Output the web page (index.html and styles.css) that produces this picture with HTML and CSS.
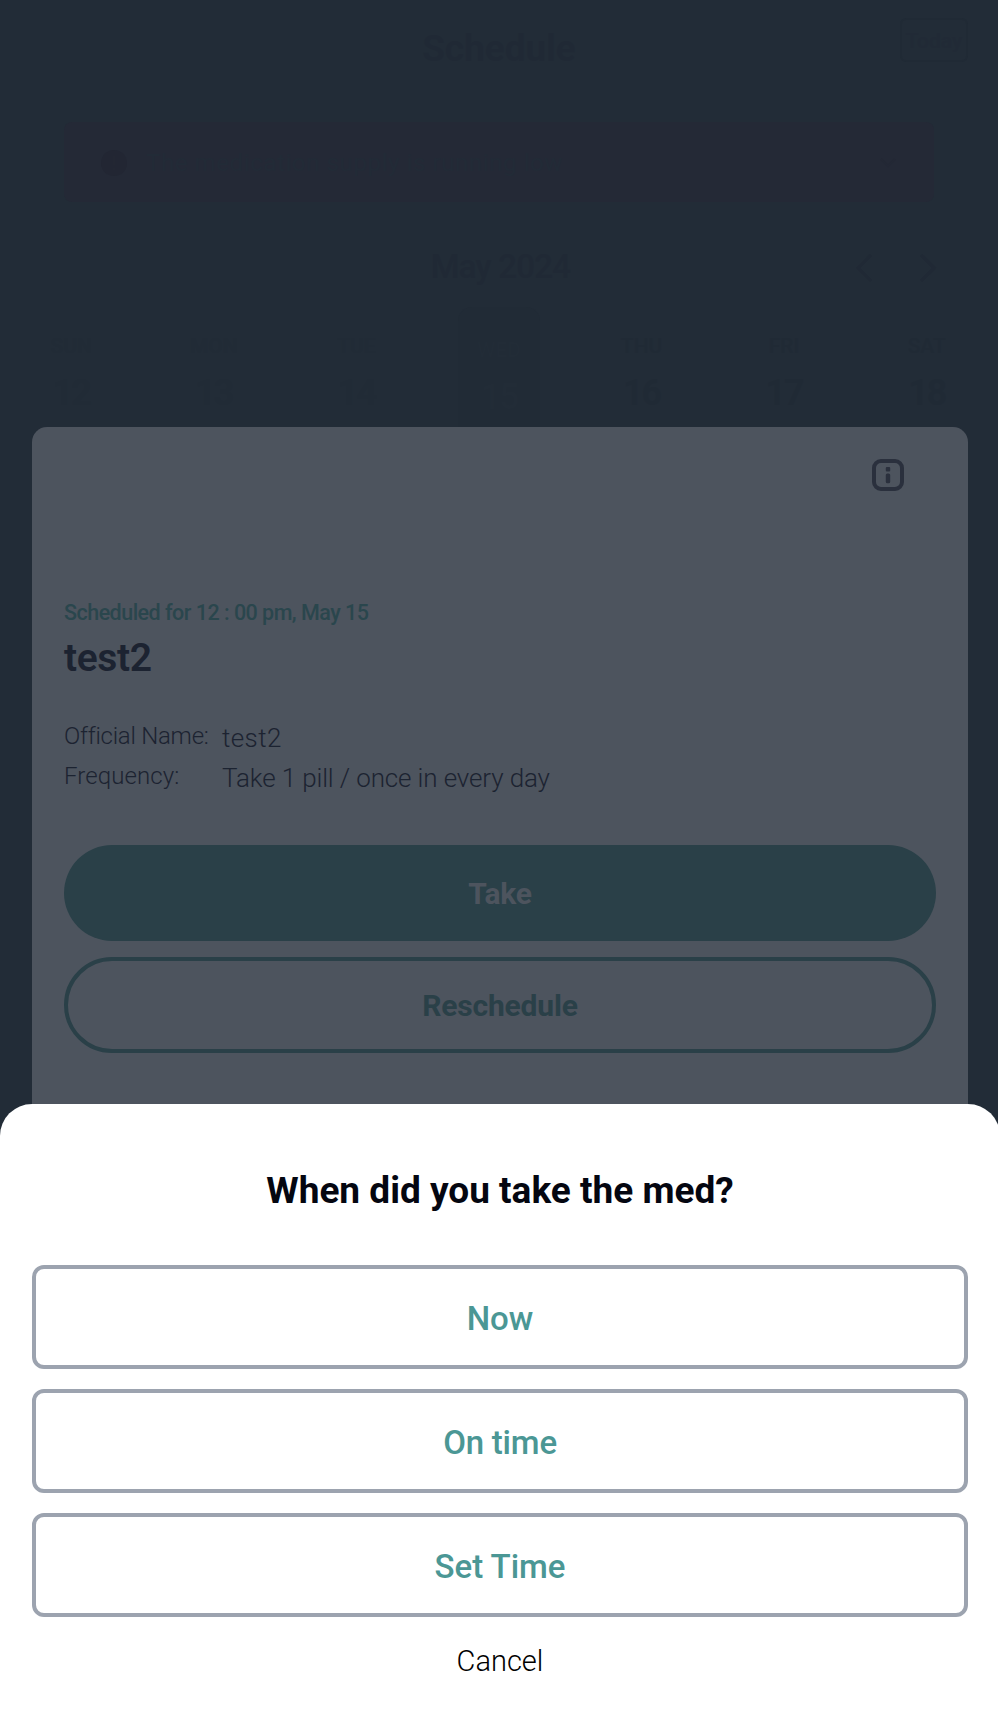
FILE: index.html
```
<!DOCTYPE html>
<html lang="en">
<head>
<meta charset="utf-8">
<title>Schedule</title>
<link rel="stylesheet" href="styles.css">
</head>
<body>
<main class="screen">
  <header class="topbar"><h1 class="topbar-title">Schedule</h1><span class="today">Today</span></header>
  <section class="banner">
    <svg width="26" height="26" viewBox="0 0 26 26"><circle cx="13" cy="13" r="13" fill="#222633"/><path d="M13 6v9M13 18v2" stroke="#232733" stroke-width="2"/></svg>
    <span class="banner-text">The medication supply is running low</span>
    <svg width="18" height="12" viewBox="0 0 18 12" fill="none" stroke="#232835" stroke-width="2"><path d="M2 2l7 7 7-7"/></svg>
  </section>
  <div class="month"><span class="month-name">May 2024</span>
    <svg class="arrows" width="82" height="30" viewBox="0 0 82 30" fill="none" stroke="#202935" stroke-width="3"><path d="M15 2L2 15l13 13M65 2l13 13-13 13"/></svg>
  </div>
  <div class="week">
    <div class="day faint"><span>SUN</span><b>12</b></div>
    <div class="day faint"><span>MON</span><b>13</b></div>
    <div class="day faint"><span>TUE</span><b>14</b></div>
    <div class="day selected"><span>WED</span><b>15</b></div>
    <div class="day"><span>THU</span><b>16</b></div>
    <div class="day"><span>FRI</span><b>17</b></div>
    <div class="day"><span>SAT</span><b>18</b></div>
  </div>
  <section class="card">
    <svg class="info" width="32" height="32" viewBox="0 0 32 32"><rect x="2" y="2" width="28" height="28" rx="7" fill="none" stroke="#2a303d" stroke-width="4"/><rect x="13.8" y="8" width="4.4" height="4.4" rx="1" fill="#2a303d"/><rect x="13.8" y="14.5" width="4.4" height="9.8" rx="1.5" fill="#2a303d"/></svg>
    <p class="when">Scheduled for 12 : 00 pm, May 15</p>
    <h2 class="med">test2</h2>
    <dl class="facts">
      <dt>Official Name:</dt><dd class="fact-short">test2</dd>
      <dt class="fact-wide">Frequency:</dt><dd>Take 1 pill / once in every day</dd>
    </dl>
    <button class="pill filled">Take</button>
    <button class="pill outline">Reschedule</button>
  </section>
  <section class="sheet">
    <h2 class="question">When did you take the med?</h2>
    <button class="option">Now</button>
    <button class="option tight">On time</button>
    <button class="option">Set Time</button>
    <button class="cancel">Cancel</button>
  </section>
</main>
</body>
</html>
```
FILE: styles.css
```
* { box-sizing: border-box; margin: 0; padding: 0; }
body { font-family: Roboto, "Liberation Sans", sans-serif; background: #222c37; }
button { font: inherit; background: none; border: 0; display: flex; align-items: center; justify-content: center; }
.screen { width: 998px; height: 1714px; overflow: hidden; display: flex; flex-direction: column; background: #222c37; color: #202935; white-space: nowrap; }

.topbar { height: 122px; flex: none; padding: 18px 30px 0; display: grid; grid-template-columns: 68px 1fr 68px; align-items: start; }
.topbar-title { grid-column: 2; text-align: center; font-size: 37px; line-height: 61px; font-weight: 600; color: #202935; }
.today { height: 44px; border: 2px solid #202a35; border-radius: 6px; line-height: 42px; text-align: center; font-size: 21px; font-weight: 500; color: #212a36; }

.banner { flex: none; margin: 0 64px; height: 80px; background: #242936; border-radius: 8px; padding: 2px 37px 0; display: flex; align-items: center; }
.banner-text { flex: 1; margin-left: 19px; font-size: 24px; letter-spacing: .6px; color: #222b37; }

.month { flex: none; height: 105px; padding-top: 45px; display: grid; grid-template-columns: 145px 1fr 82px; padding-right: 60px; }
.month-name { grid-column: 2; line-height: 40px; font-size: 33px; font-weight: 500; text-align: center; letter-spacing: -.8px; }
.arrows { margin-top: 6px; }

.week { flex: none; height: 120px; display: grid; grid-template-columns: repeat(7, 1fr); justify-items: center; }
.day { width: 82px; padding-top: 26px; display: flex; flex-direction: column; align-items: center; font-size: 21px; font-weight: 500; line-height: 26px; color: #202a35; }
.day b { margin-top: 13px; font-size: 36px; line-height: 42px; font-weight: 600; letter-spacing: -2px; }
.faint { color: #212b36; }
.selected { background: #212b36; border-radius: 14px 14px 0 0; padding-top: 30px; color: #222c37; }

.card { flex: none; margin: 0 30px 0 32px; height: 677px; background: #4d545e; border-radius: 15px 15px 0 0; padding: 32px 32px 0; display: flex; flex-direction: column; color: #1c2331; }
.info { align-self: flex-end; margin-right: 32px; }
.when { margin-top: 107px; height: 30px; line-height: 30px; font-size: 21.5px; color: #2a464d; font-weight: 500; letter-spacing: -.52px; }
.med { margin-top: 5px; height: 50px; line-height: 50px; font-size: 39px; font-weight: 600; letter-spacing: -.4px; }
.facts { margin-top: 33px; display: grid; grid-template-columns: 158px 1fr; grid-auto-rows: 40px; font-weight: 350; }
.facts dt { font-size: 24px; line-height: 40px; letter-spacing: -.25px; }
.facts dd { font-size: 26px; line-height: 44px; letter-spacing: -.13px; }
.facts .fact-short { letter-spacing: .4px; }
.facts .fact-wide { letter-spacing: .1px; }
.pill { flex: none; width: 872px; height: 96px; border-radius: 48px; font-size: 30px; font-weight: 700; letter-spacing: -.2px; }
.filled { margin-top: 49px; background: #2a4048; color: #4d545e; }
.outline { margin-top: 16px; border: 4px solid #2a4048; color: #2a4048; }

.sheet { flex: none; height: 610px; background: #fff; padding: 62px 32px 0; margin-right: -2px; display: flex; flex-direction: column; gap: 20px; border-radius: 32px 32px 0 0; }
.question { height: 79px; line-height: 50px; text-align: center; font-size: 37px; font-weight: 700; color: #040610; }
.option { flex: none; height: 104px; border: 4px solid #9ca3af; border-radius: 12px; padding-top: 2px; color: #4b9795; font-size: 33px; font-weight: 550; }
.tight { letter-spacing: -.2px; }
.cancel { height: 48px; font-size: 29px; font-weight: 350; color: #000; }
```
